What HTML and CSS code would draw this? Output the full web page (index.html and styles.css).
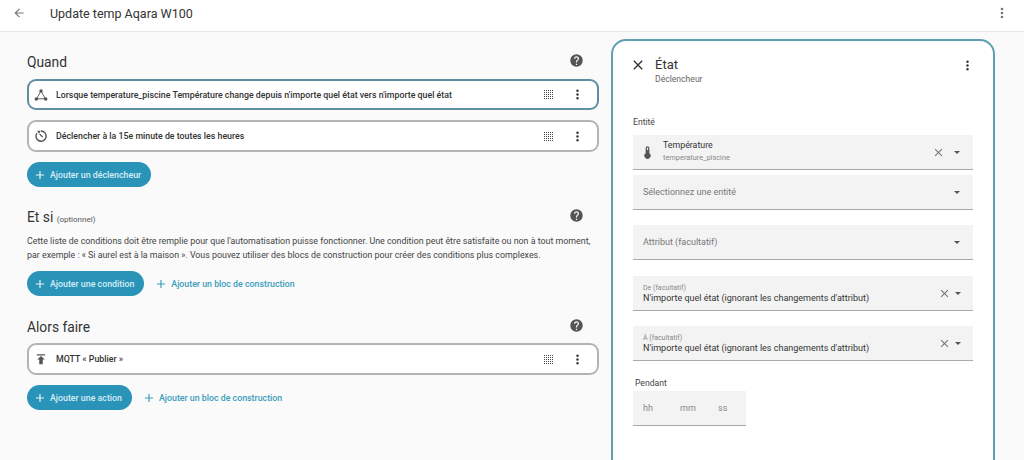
FILE: index.html
```html
<!DOCTYPE html>
<html lang="fr">
<head>
<meta charset="utf-8">
<title>Update temp Aqara W100</title>
<link rel="stylesheet" href="styles.css">
</head>
<body>
<header class="topbar">
  <svg class="back" viewBox="0 0 24 24"><path d="M20 11v2H8l5.5 5.5-1.42 1.42L4.16 12l7.92-7.92L13.5 5.5 8 11h12z"/></svg>
  <h1 class="title">Update temp Aqara W100</h1>
  <svg class="topmenu" viewBox="0 0 24 24"><path d="M12 16a2 2 0 1 1 0 4 2 2 0 0 1 0-4zm0-6a2 2 0 1 1 0 4 2 2 0 0 1 0-4zm0-6a2 2 0 1 1 0 4 2 2 0 0 1 0-4z"/></svg>
</header>
<main class="layout">
  <div class="editor">
    <section class="section sec-when">
      <div class="sec-head">
        <h2 class="sec-title">Quand</h2>
        <svg class="help" viewBox="0 0 24 24"><path d="M15.07 11.25l-.9.92C13.45 12.89 13 13.5 13 15h-2v-.5c0-1.11.45-2.11 1.17-2.83l1.24-1.26c.37-.36.59-.86.59-1.41a2 2 0 0 0-2-2 2 2 0 0 0-2 2H8a4 4 0 0 1 4-4 4 4 0 0 1 4 4c0 .88-.36 1.67-.93 2.25zM13 19h-2v-2h2zM12 2A10 10 0 0 0 2 12a10 10 0 0 0 10 10 10 10 0 0 0 10-10A10 10 0 0 0 12 2z"/></svg>
      </div>
      <div class="card card-active">
        <svg class="card-icon" viewBox="0 0 24 24"><path d="M12 5L4.5 18.5M12 5l7.5 13.5M4.5 18.5h15" fill="none" stroke="#555" stroke-width="1.6"/><circle cx="12" cy="5" r="3"/><circle cx="4" cy="19" r="3"/><circle cx="20" cy="19" r="3"/></svg>
        <span class="card-text">Lorsque temperature_piscine Température change depuis n'importe quel état vers n'importe quel état</span>
        <svg class="drag" viewBox="0 0 9 9"><path d="M0 .5h9M0 2.5h9M0 4.5h9M0 6.5h9M0 8.5h9"/></svg>
        <svg class="dots" viewBox="0 0 24 24"><path d="M12 16a2 2 0 1 1 0 4 2 2 0 0 1 0-4zm0-6a2 2 0 1 1 0 4 2 2 0 0 1 0-4zm0-6a2 2 0 1 1 0 4 2 2 0 0 1 0-4z"/></svg>
      </div>
      <div class="card">
        <svg class="card-icon" viewBox="0 0 24 24"><path d="M12 3.5a8.7 8.7 0 1 1-7 3.6" fill="none" stroke="#555" stroke-width="2.4"/><path d="M5.5 3h6l-3 5.5zM10.5 8l5 5-1.6 1.6-5-5z"/></svg>
        <span class="card-text">Déclencher à la 15e minute de toutes les heures</span>
        <svg class="drag" viewBox="0 0 9 9"><path d="M0 .5h9M0 2.5h9M0 4.5h9M0 6.5h9M0 8.5h9"/></svg>
        <svg class="dots" viewBox="0 0 24 24"><path d="M12 16a2 2 0 1 1 0 4 2 2 0 0 1 0-4zm0-6a2 2 0 1 1 0 4 2 2 0 0 1 0-4zm0-6a2 2 0 1 1 0 4 2 2 0 0 1 0-4z"/></svg>
      </div>
      <div class="actions">
        <span class="btn"><svg class="plus" viewBox="0 0 24 24"><path d="M19 13h-6v6h-2v-6H5v-2h6V5h2v6h6z"/></svg>Ajouter un déclencheur</span>
      </div>
    </section>
    <section class="section sec-if">
      <div class="sec-head">
        <h2 class="sec-title">Et si <small class="opt">(optionnel)</small></h2>
        <svg class="help" viewBox="0 0 24 24"><path d="M15.07 11.25l-.9.92C13.45 12.89 13 13.5 13 15h-2v-.5c0-1.11.45-2.11 1.17-2.83l1.24-1.26c.37-.36.59-.86.59-1.41a2 2 0 0 0-2-2 2 2 0 0 0-2 2H8a4 4 0 0 1 4-4 4 4 0 0 1 4 4c0 .88-.36 1.67-.93 2.25zM13 19h-2v-2h2zM12 2A10 10 0 0 0 2 12a10 10 0 0 0 10 10 10 10 0 0 0 10-10A10 10 0 0 0 12 2z"/></svg>
      </div>
      <p class="desc">Cette liste de conditions doit être remplie pour que l'automatisation puisse fonctionner. Une condition peut être satisfaite ou non à tout moment,<br>par exemple : « Si aurel est à la maison ». Vous pouvez utiliser des blocs de construction pour créer des conditions plus complexes.</p>
      <div class="actions">
        <span class="btn"><svg class="plus" viewBox="0 0 24 24"><path d="M19 13h-6v6h-2v-6H5v-2h6V5h2v6h6z"/></svg>Ajouter une condition</span>
        <span class="btn-text"><svg class="plus" viewBox="0 0 24 24"><path d="M19 13h-6v6h-2v-6H5v-2h6V5h2v6h6z"/></svg>Ajouter un bloc de construction</span>
      </div>
    </section>
    <section class="section sec-then">
      <div class="sec-head">
        <h2 class="sec-title">Alors faire</h2>
        <svg class="help" viewBox="0 0 24 24"><path d="M15.07 11.25l-.9.92C13.45 12.89 13 13.5 13 15h-2v-.5c0-1.11.45-2.11 1.17-2.83l1.24-1.26c.37-.36.59-.86.59-1.41a2 2 0 0 0-2-2 2 2 0 0 0-2 2H8a4 4 0 0 1 4-4 4 4 0 0 1 4 4c0 .88-.36 1.67-.93 2.25zM13 19h-2v-2h2zM12 2A10 10 0 0 0 2 12a10 10 0 0 0 10 10 10 10 0 0 0 10-10A10 10 0 0 0 12 2z"/></svg>
      </div>
      <div class="card">
        <svg class="card-icon" viewBox="0 0 24 24"><path d="M5 4h14v2H5zM12 7l6.5 6H15v8H9v-8H5.5z"/></svg>
        <span class="card-text">MQTT « Publier »</span>
        <svg class="drag" viewBox="0 0 9 9"><path d="M0 .5h9M0 2.5h9M0 4.5h9M0 6.5h9M0 8.5h9"/></svg>
        <svg class="dots" viewBox="0 0 24 24"><path d="M12 16a2 2 0 1 1 0 4 2 2 0 0 1 0-4zm0-6a2 2 0 1 1 0 4 2 2 0 0 1 0-4zm0-6a2 2 0 1 1 0 4 2 2 0 0 1 0-4z"/></svg>
      </div>
      <div class="actions">
        <span class="btn"><svg class="plus" viewBox="0 0 24 24"><path d="M19 13h-6v6h-2v-6H5v-2h6V5h2v6h6z"/></svg>Ajouter une action</span>
        <span class="btn-text"><svg class="plus" viewBox="0 0 24 24"><path d="M19 13h-6v6h-2v-6H5v-2h6V5h2v6h6z"/></svg>Ajouter un bloc de construction</span>
      </div>
    </section>
  </div>
  <aside class="panel">
    <div class="panel-head">
      <svg class="close" viewBox="0 0 24 24"><path d="M19 6.41L17.59 5 12 10.59 6.41 5 5 6.41 10.59 12 5 17.59 6.41 19 12 13.41 17.59 19 19 17.59 13.41 12z"/></svg>
      <div class="panel-titles">
        <div class="panel-title">État</div>
        <div class="panel-sub">Déclencheur</div>
      </div>
      <svg class="dots" viewBox="0 0 24 24"><path d="M12 16a2 2 0 1 1 0 4 2 2 0 0 1 0-4zm0-6a2 2 0 1 1 0 4 2 2 0 0 1 0-4zm0-6a2 2 0 1 1 0 4 2 2 0 0 1 0-4z"/></svg>
    </div>
    <div class="label">Entité</div>
    <div class="field field-entity">
      <svg class="thermo" viewBox="0 0 24 24"><path d="M15 13V5a3 3 0 0 0-6 0v8a5 5 0 1 0 6 0zm-3-9a1 1 0 0 1 1 1v3h-2V5a1 1 0 0 1 1-1z"/></svg>
      <div class="entity-text">
        <div class="entity-name">Température</div>
        <div class="entity-id">temperature_piscine</div>
      </div>
      <svg class="x" viewBox="0 0 24 24"><path d="M19 6.41L17.59 5 12 10.59 6.41 5 5 6.41 10.59 12 5 17.59 6.41 19 12 13.41 17.59 19 19 17.59 13.41 12z"/></svg>
      <span class="caret"></span>
    </div>
    <div class="field field-second">
      <span class="placeholder">Sélectionnez une entité</span>
      <span class="caret"></span>
    </div>
    <div class="field field-third">
      <span class="placeholder">Attribut (facultatif)</span>
      <span class="caret"></span>
    </div>
    <div class="field field-from field-value">
      <div class="value-wrap">
        <div class="mini">De (facultatif)</div>
        <div class="value">N'importe quel état (ignorant les changements d'attribut)</div>
      </div>
      <svg class="x" viewBox="0 0 24 24"><path d="M19 6.41L17.59 5 12 10.59 6.41 5 5 6.41 10.59 12 5 17.59 6.41 19 12 13.41 17.59 19 19 17.59 13.41 12z"/></svg>
      <span class="caret"></span>
    </div>
    <div class="field field-third field-value">
      <div class="value-wrap">
        <div class="mini">À (facultatif)</div>
        <div class="value">N'importe quel état (ignorant les changements d'attribut)</div>
      </div>
      <svg class="x" viewBox="0 0 24 24"><path d="M19 6.41L17.59 5 12 10.59 6.41 5 5 6.41 10.59 12 5 17.59 6.41 19 12 13.41 17.59 19 19 17.59 13.41 12z"/></svg>
      <span class="caret"></span>
    </div>
    <div class="label label-duration">Pendant</div>
    <div class="duration">
      <span class="unit unit-h">hh</span>
      <span class="unit unit-m">mm</span>
      <span class="unit">ss</span>
    </div>
  </aside>
</main>
</body>
</html>
```
FILE: styles.css
```css
* { box-sizing: border-box; }
html, body { margin: 0; height: 460px; overflow: hidden; }
body { background: #fafafa; font-family: Roboto, "Liberation Sans", sans-serif; color: #212121; }

.topbar { height: 32px; background: #fff; border-bottom: 1px solid #e8e8e8; display: flex; align-items: center; padding: 0 14px 5px 12px; }
.back { width: 14px; height: 14px; fill: #777; }
.title { margin: 0 0 0 24px; font-size: 12.5px; font-weight: 400; color: #333; flex: 1; }
.topmenu { width: 16px; height: 16px; fill: #777; }

.layout { display: flex; align-items: flex-start; height: 428px; overflow: hidden; padding: 7px 0 0 27px; }
.editor { width: 572px; flex: none; }
.section { display: block; }
.sec-when { padding-top: 13px; }
.sec-if { padding-top: 20px; }
.sec-then { padding-top: 21px; }
.sec-head { display: flex; justify-content: space-between; align-items: center; height: 20px; padding-right: 15px; }
.sec-title { margin: 0; font-size: 13.8px; font-weight: 400; color: #333; }
.opt { font-size: 8px; color: #555; }
.help { width: 15px; height: 15px; fill: #555; margin-top: -3px; }

.card { height: 32px; margin-top: 10px; background: #fff; border: 2px solid #b4b4b4; border-radius: 9px; display: flex; align-items: center; padding: 0 12px 0 5px; }
.sec-when .card-active { height: 31px; margin-top: 7px; border-color: #5f8fa0; }
.sec-then .card { margin-top: 6px; }
.card-icon { width: 14px; height: 14px; fill: #555; flex: none; }
.card-text { flex: 1; margin-left: 8px; font-size: 8.8px; font-weight: 500; color: #333; white-space: nowrap; }
.drag { width: 9px; height: 9px; fill: none; stroke: #444; stroke-width: 1; stroke-dasharray: 1 1; margin-right: 17px; flex: none; }
.dots { width: 15px; height: 15px; fill: #333; flex: none; }

.actions { display: flex; align-items: center; margin-top: 10px; height: 25px; }
.btn { height: 25px; display: inline-flex; align-items: center; background: #2a93b8; color: #d6eef6; border-radius: 13px; padding: 0 10px 0 6px; font-size: 8.8px; font-weight: 500; white-space: nowrap; }
.btn-text { display: inline-flex; align-items: center; color: #3b9dbc; font-size: 8.8px; font-weight: 500; margin-left: 10px; white-space: nowrap; }
.plus { width: 14px; height: 14px; fill: currentColor; margin-right: 3px; }
.btn .plus { fill: #e8f5f9; }

.desc { margin: 7px 0 0; font-size: 8.85px; line-height: 14px; color: #444; white-space: nowrap; }
.sec-if .actions { margin-top: 9px; }

.panel { width: 384px; height: 440px; margin-left: 12px; flex: none; background: #fff; border: 2px solid #5f9fb0; border-radius: 15px; padding: 15px 20px 0; }
.panel-head { display: flex; align-items: flex-start; }
.close { width: 16px; height: 16px; fill: #333; margin: 1px 0 0 -3px; }
.panel-titles { flex: 1; margin-left: 9px; }
.panel-title { font-size: 13px; color: #333; line-height: 16px; margin-top: 1px; }
.panel-sub { font-size: 8.6px; color: #666; line-height: 12px; }
.panel-head .dots { margin-top: 2px; margin-right: -2px; }
.label { font-size: 8.6px; color: #444; margin-top: 31px; line-height: 12px; }
.label-duration { margin: 16px 0 0 2px; }

.field { height: 35px; background: #f3f3f3; border-bottom: 1px solid #aaa; display: flex; align-items: center; padding: 0 13px 0 10px; margin-top: 5px; }
.field-entity { margin-top: 7px; padding-left: 7px; }
.field-third { margin-top: 15px; }
.field-from { margin-top: 16px; }
.field-value { padding-right: 12px; }
.caret { width: 0; height: 0; border-left: 3px solid transparent; border-right: 3px solid transparent; border-top: 3px solid #555; flex: none; margin-left: 9.5px; }
.value-wrap ~ .caret { margin-left: 4.5px; }
.placeholder { flex: 1; font-size: 9px; color: #777; }
.thermo { width: 15px; height: 15px; fill: #555; flex: none; }
.entity-text { flex: 1; margin-left: 8px; }
.entity-name { font-size: 8.8px; color: #333; line-height: 11px; }
.entity-id { font-size: 7.4px; color: #888; line-height: 13px; }
.x { width: 13px; height: 13px; fill: #777; flex: none; }
.value-wrap { flex: 1; padding-top: 2px; }
.mini { font-size: 7px; color: #888; line-height: 8px; }
.value { font-size: 9px; color: #333; line-height: 12px; }

.duration { width: 113px; height: 35px; margin-top: 2px; background: #f3f3f3; border-bottom: 1px solid #aaa; display: flex; align-items: center; padding: 0 0 0 10px; font-size: 9px; color: #888; }
.unit-h { width: 37px; }
.unit-m { width: 38px; }
```
